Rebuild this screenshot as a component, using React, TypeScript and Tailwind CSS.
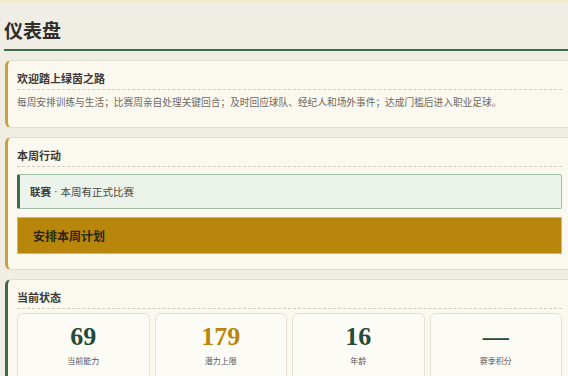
import React from 'react'

const sans = { fontFamily: '"Noto Sans CJK SC", "Liberation Sans", sans-serif' }

function Card({ accent, children }: { accent: string; children: React.ReactNode }) {
  return (
    <div
      className={`w-[568px] rounded-[6px] border border-[#e3ddcc] border-l-[3px] ${accent} bg-[#fbf8ef] pl-[9px] pr-[10px]`}
    >
      {children}
    </div>
  )
}

function CardTitle({ text }: { text: string }) {
  return (
    <div className="border-b border-dashed border-[#d3cdbd] pb-[4px] text-[11px] font-bold leading-[14px] text-[#3b3a36]">
      {text}
    </div>
  )
}

function Stat({ value, label, color }: { value: string; label: string; color: string }) {
  return (
    <div className="flex h-[80px] flex-col items-center rounded-[6px] border border-[#e6e1d3] bg-[#fdfbf6] pt-[8px]">
      <div className={`font-['Liberation_Serif',serif] text-[26px] font-bold leading-[30px] ${color}`}>{value}</div>
      <div className="mt-[4px] text-[8px] leading-[10px] text-[#555]">{label}</div>
    </div>
  )
}

export default function App() {
  return (
    <div className="h-[376px] w-[568px] overflow-hidden bg-[#f0ede4]" style={sans}>
      <div className="h-[2px] bg-[#f5e9c3]" />
      <div className="w-[600px] pl-[4px]">
        <h1 className="pt-[17px] pb-[8px] text-[19px] font-bold leading-[22px] text-[#2f2e2a]">仪表盘</h1>
        <div className="h-[2px] bg-[#3f6a4b]" />

        <div className="mt-[9px] flex flex-col gap-[9px] pl-[1px]">
          <Card accent="border-l-[#c8a23c]">
            <div className="pt-[10px]">
              <CardTitle text="欢迎踏上绿茵之路" />
              <p className="pt-[5px] pb-[18px] text-[9.7px] leading-[14px] text-[#6e6a60]">
                每周安排训练与生活；比赛周亲自处理关键回合；及时回应球队、经纪人和场外事件；达成门槛后进入职业足球。
              </p>
            </div>
          </Card>

          <Card accent="border-l-[#c8a23c]">
            <div className="pt-[10px] pb-[15px]">
              <CardTitle text="本周行动" />
              <div className="mt-[7px] flex h-[35px] items-center rounded-[2px] border border-[#9dbea7] border-l-[3px] border-l-[#3f6a4b] bg-[#ebf3ea] pl-[10px] text-[10.5px] text-[#4a4944]">
                <span className="font-bold text-[#3b3a36]">联赛</span>
                <span className="font-['Liberation_Serif',serif] mx-[3px]">·</span>
                <span>本周有正式比赛</span>
              </div>
              <button className="mt-[8px] flex h-[37px] w-full items-center border border-[#d8b85e] bg-[#b8860b] pl-[15px] text-left text-[12px] font-bold text-[#2c2616]">
                安排本周计划
              </button>
            </div>
          </Card>

          <Card accent="border-l-[#3f6a4b]">
            <div className="pt-[10px]">
              <CardTitle text="当前状态" />
              <div className="mt-[4px] grid grid-cols-4 gap-[5px]">
                <Stat value="69" label="当前能力" color="text-[#234a3a]" />
                <Stat value="179" label="潜力上限" color="text-[#b8860b]" />
                <Stat value="16" label="年龄" color="text-[#234a3a]" />
                <Stat value="—" label="赛季积分" color="text-[#234a3a]" />
              </div>
            </div>
          </Card>
        </div>
      </div>
    </div>
  )
}
